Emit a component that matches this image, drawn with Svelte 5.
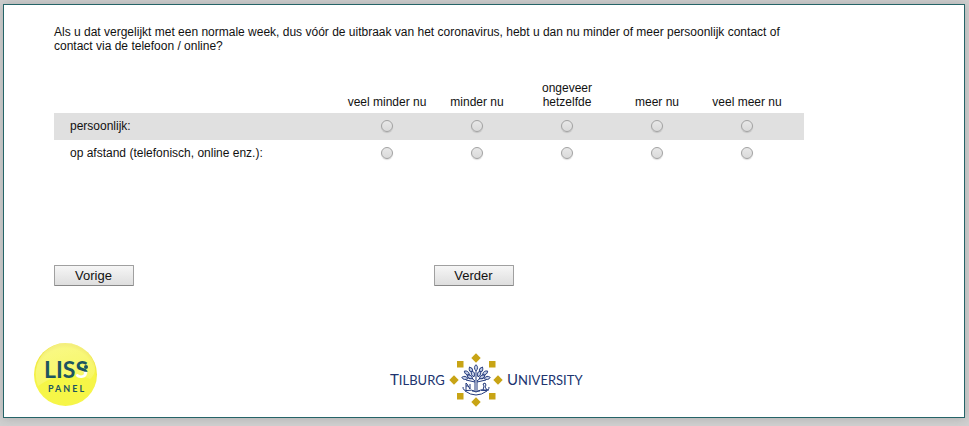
<script>
  const options = ['veel minder nu', 'minder nu', 'ongeveer hetzelfde', 'meer nu', 'veel meer nu'];
  const rows = [
    { id: 'personal', label: 'persoonlijk:' },
    { id: 'remote', label: 'op afstand (telefonisch, online enz.):' }
  ];
  let answers = $state({ personal: null, remote: null });

  const diamonds = [
    [90, 5],
    [68, 27],
    [112, 27],
    [90, 49]
  ];
  const squares = [
    [74, 11],
    [106, 11],
    [74, 43],
    [106, 43]
  ];
  const leaves = [
    [90, 15, 0],
    [85, 17, -28],
    [95, 17, 28],
    [81, 20, -55],
    [99, 20, 55],
    [87, 21, -20],
    [93, 21, 20],
    [79, 25, -80],
    [101, 25, 80],
    [84, 24, -60],
    [96, 24, 60]
  ];
</script>

<main>
  <form onsubmit={(e) => e.preventDefault()}>
    <p id="question">
      Als u dat vergelijkt met een normale week, dus vóór de uitbraak van het coronavirus, hebt u dan
      nu minder of meer persoonlijk contact of contact via de telefoon / online?
    </p>

    <table aria-labelledby="question">
      <thead>
        <tr>
          <td></td>
          {#each options as option}
            <th scope="col" class="option">{option}</th>
          {/each}
          <td class="end"></td>
        </tr>
      </thead>
      <tbody>
        {#each rows as row}
          <tr>
            <th scope="row">{row.label}</th>
            {#each options as option}
              <td class="option">
                <input
                  type="radio"
                  name={row.id}
                  value={option}
                  aria-label="{row.label} {option}"
                  bind:group={answers[row.id]}
                />
              </td>
            {/each}
            <td class="end"></td>
          </tr>
        {/each}
      </tbody>
    </table>

    <div class="buttons">
      <button type="button">Vorige</button>
      <button type="submit">Verder</button>
    </div>
  </form>

  <footer>
    <svg class="liss" width="64" height="64" viewBox="0 0 64 64" role="img" aria-label="LISS Panel">
      <defs>
        <radialGradient id="ball" cx="50%" cy="55%" r="52%">
          <stop offset="0" stop-color="#f6f844" />
          <stop offset="0.9" stop-color="#f6f548" />
          <stop offset="1" stop-color="#efe840" />
        </radialGradient>
        <linearGradient id="gloss" x1="0.2" y1="0" x2="0.6" y2="1">
          <stop offset="0" stop-color="#fff" stop-opacity="0.35" />
          <stop offset="1" stop-color="#fff" stop-opacity="0.15" />
        </linearGradient>
        <linearGradient id="swirl" gradientUnits="userSpaceOnUse" x1="48" y1="34" x2="49" y2="22">
          <stop offset="0.42" stop-color="#fff" />
          <stop offset="0.5" stop-color="#1d5560" />
        </linearGradient>
      </defs>
      <circle cx="31.5" cy="31.5" r="31.5" fill="url(#ball)" />
      <path d="M2 27A30 30 0 0 1 61 23Q62 31 56 36Q30 25 4 43Q1 35 2 27Z" fill="url(#gloss)" />
      <text class="name" x="10" y="35">LIS<tspan fill="url(#swirl)">S</tspan></text>
      <circle cx="52" cy="24" r="2" fill="#1d5560" />
      <text class="panel" x="14" y="49">PANEL</text>
    </svg>

    <svg class="tilburg" width="202" height="54" viewBox="0 0 202 54" role="img" aria-label="Tilburg University">
      <g fill="#c8a415">
        {#each diamonds as [x, y]}
          <path d="M{x} {y - 4.7}l4.7 4.7-4.7 4.7-4.7-4.7Z" />
        {/each}
        {#each squares as [x, y]}
          <rect x={x - 3} y={y - 3} width="6.5" height="6.5" />
        {/each}
      </g>
      <g fill="none" stroke="#22397c">
        <path d="M89 37V28L83 23M91 37V28L97 23M90 28V18M89 29L80 27M91 29L100 27M86 38H94" />
      </g>
      <g fill="#c3cde4" stroke="#22397c" stroke-width="0.9">
        {#each leaves as [x, y, angle]}
          <path d="M0 3Q-3.2-.4 0-3.3Q3.2-.4 0 3Z" transform="translate({x} {y}) rotate({angle})" />
        {/each}
      </g>
      <g fill="none" stroke="#22397c">
        <path d="M80 37V30L81 31L84 36V31M82 33H80M97 37L98 33L97 31L99 30L100 32L99 34L101 37M95 37H103" />
        <path d="M77 34Q77 38 81 37.500Q86 36 90 39Q94 36 99 37.500Q103 38 103 34M79 38Q90 46 101 38" />
      </g>
      <text class="word" x="4" y="32">T<tspan class="small">ILBURG</tspan></text>
      <text class="word" x="121" y="32">U<tspan class="small">NIVERSITY</tspan></text>
    </svg>
  </footer>
</main>

<style>
  :global(body) {
    background: #d0d0d0;
  }

  /* keeps the outer margins inside the page */
  :global(#app) {
    display: flow-root;
  }

  main {
    box-sizing: border-box;
    margin: 4px 4px 8px 3px;
    padding: 20px 50px 10px;
    border: 1px solid #256468;
    background: #fff;
    box-shadow: 0 0 10px #aaa;
    color: #111;
    font: 12px/14px 'Liberation Sans', Arial, sans-serif;
  }

  form {
    max-width: 750px;
  }

  p {
    margin: 0 0 28px;
  }

  table {
    width: 100%;
    border-collapse: collapse;
    table-layout: fixed;
  }

  th,
  td {
    box-sizing: border-box;
    padding: 0;
    font-weight: normal;
  }

  thead th {
    padding: 0 4px 4px;
    vertical-align: bottom;
  }

  .option {
    width: 90px;
    text-align: center;
  }

  .end {
    width: 12px;
  }

  tbody tr {
    height: 27px;
  }

  tbody tr:nth-child(odd) {
    background: #e0e0e0;
  }

  tbody th,
  tbody td {
    padding-bottom: 2px;
  }

  tbody th {
    padding-left: 16px;
    text-align: left;
  }

  input {
    appearance: none;
    display: block;
    box-sizing: border-box;
    width: 12px;
    height: 12px;
    margin: 0 auto;
    border: 1px solid #a2a2a2;
    border-radius: 50%;
    background: linear-gradient(#e8e8e8, #dadada);
    box-shadow: 0 1px 1px #0002;
  }

  input:checked {
    background: radial-gradient(#444 35%, #e4e4e4 40%);
  }

  .buttons {
    display: flex;
    gap: 300px;
    margin-top: 98px;
  }

  button {
    box-sizing: border-box;
    width: 80px;
    height: 21px;
    padding: 0 1px 0 0;
    border: 1px solid #a0a0a0;
    border-bottom-color: #888;
    border-radius: 1px;
    background: linear-gradient(#f6f6f6, #dedede);
    color: #111;
    font: 13px/19px 'Liberation Sans', Arial, sans-serif;
  }

  footer {
    display: flex;
    align-items: flex-end;
    justify-content: space-between;
    margin: 57px 0 0 -20px;
  }

  footer::after {
    content: '';
    width: 38px;
  }

  svg {
    display: block;
  }

  .name {
    fill: #1d5560;
    font: bold 23px Lato, sans-serif;
  }

  .panel {
    fill: #1d5560;
    font: bold 9px Lato, sans-serif;
    letter-spacing: 2px;
  }

  .word {
    fill: #20346f;
    font: 15px Lato, sans-serif;
  }

  .small {
    font-size: 13px;
  }
</style>
